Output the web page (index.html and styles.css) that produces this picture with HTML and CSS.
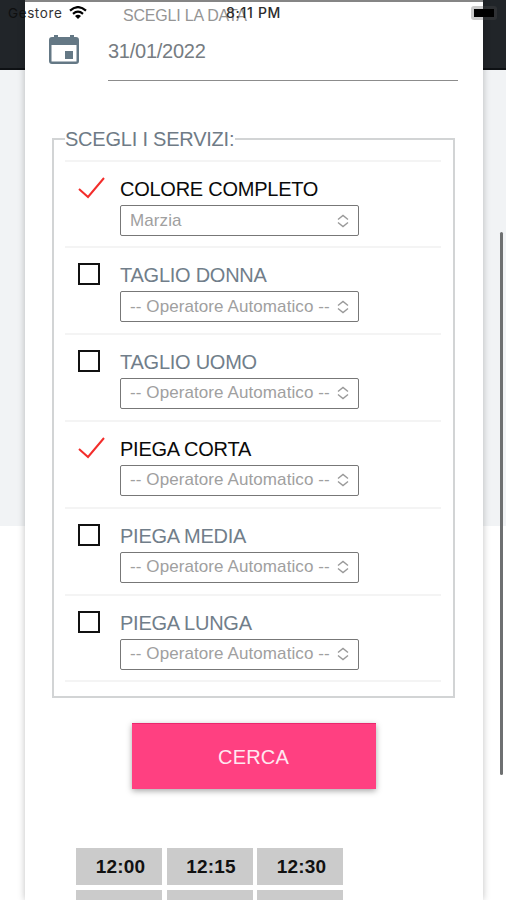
FILE: index.html
```
<!DOCTYPE html>
<html lang="it">
<head>
<meta charset="utf-8">
<title>Prenotazione</title>
<link rel="stylesheet" href="styles.css">
</head>
<body>
<div class="screen">
  <main class="card">
    <section class="date">
      <svg class="calendar" viewBox="0 0 30 31"><path fill="#647885" fill-rule="evenodd" d="M5 1h4v2h12V1h4v2h2q3 0 3 3v21q0 3-3 3H3q-3 0-3-3V6q0-3 3-3h2zM2.5 11v16.5h25V11z"/><path fill="#647885" d="M16 17h8v8h-8z"/></svg>
      <div class="date-field">
        <label class="date-label">SCEGLI LA DATA</label>
        <div class="date-value">31/01/2022</div>
      </div>
    </section>
    <fieldset class="services">
      <legend><span>SCEGLI I SERVIZI:</span></legend>
      <div class="row on"><svg class="tick" viewBox="0 0 28 22"><path d="M1 12l9 8L26 1"/></svg><div class="service"><span class="name">COLORE COMPLETO</span><div class="select"><span>Marzia</span><svg viewBox="0 0 12 14"><path d="M1 5.5l5-4 5 4M1 8.5l5 4 5-4"/></svg></div></div></div>
      <div class="row"><i class="box"></i><div class="service"><span class="name">TAGLIO DONNA</span><div class="select"><span>-- Operatore Automatico --</span><svg viewBox="0 0 12 14"><path d="M1 5.5l5-4 5 4M1 8.5l5 4 5-4"/></svg></div></div></div>
      <div class="row"><i class="box"></i><div class="service"><span class="name">TAGLIO UOMO</span><div class="select"><span>-- Operatore Automatico --</span><svg viewBox="0 0 12 14"><path d="M1 5.5l5-4 5 4M1 8.5l5 4 5-4"/></svg></div></div></div>
      <div class="row on"><svg class="tick" viewBox="0 0 28 22"><path d="M1 12l9 8L26 1"/></svg><div class="service"><span class="name">PIEGA CORTA</span><div class="select"><span>-- Operatore Automatico --</span><svg viewBox="0 0 12 14"><path d="M1 5.5l5-4 5 4M1 8.5l5 4 5-4"/></svg></div></div></div>
      <div class="row"><i class="box"></i><div class="service"><span class="name">PIEGA MEDIA</span><div class="select"><span>-- Operatore Automatico --</span><svg viewBox="0 0 12 14"><path d="M1 5.5l5-4 5 4M1 8.5l5 4 5-4"/></svg></div></div></div>
      <div class="row"><i class="box"></i><div class="service"><span class="name">PIEGA LUNGA</span><div class="select"><span>-- Operatore Automatico --</span><svg viewBox="0 0 12 14"><path d="M1 5.5l5-4 5 4M1 8.5l5 4 5-4"/></svg></div></div></div>
    </fieldset>
    <button class="search">CERCA</button>
    <div class="slots">
      <div>12:00</div><div>12:15</div><div>12:30</div>
      <div></div><div></div><div></div>
    </div>
  </main>
  <div class="status">
    <span class="carrier">Gestore</span>
    <svg class="wifi" viewBox="0 0 18 13"><g fill="none" stroke="#000" stroke-width="2.2"><path d="M1 4.6Q9-2.4 17 4.6"/><path d="M4 7.8q5-4.2 10 0"/></g><path d="M6 10q3-2.4 6 0l-3 3z"/></svg>
    <span class="clock">8:11 PM</span>
    <span class="battery"></span>
  </div>
  <div class="scrollbar"></div>
</div>
</body>
</html>
```
FILE: styles.css
```
* { box-sizing: border-box; }
body { margin: 0; font-family: "Liberation Sans", Arial, sans-serif; }
.screen {
  position: relative;
  height: 900px;
  overflow: hidden;
  padding: 0 23px 0 25px;
  background: linear-gradient(#212529 0 68px, #0e1114 68px 70px, #f1f3f5 70px 526px, #fff 526px);
}
.card {
  height: 900px;
  overflow: hidden;
  border-top: 2px solid #858585;
  background: #fff;
  box-shadow: 0 0 7px rgba(0, 0, 0, .25);
}
.date { display: flex; height: 79px; padding: 0 25px 0 24px; }
.calendar { width: 30px; height: 31px; margin: 32px 29px 0 0; }
.date-field { flex: 1; border-bottom: 1px solid #8c8c8c; }
.date-label {
  display: block;
  margin: 5px 0 0 15px;
  font-size: 16px;
  line-height: 18px;
  letter-spacing: -.2px;
  color: #959595;
}
.date-value { margin-top: 14px; font-size: 20px; line-height: 24px; letter-spacing: -.25px; color: #767c82; }
.services {
  height: 570px;
  margin: 47px 28px 0 27px;
  padding: 0 13px 0 12px;
  border: 2px solid #d2d4d5;
  min-width: 0;
}
legend { height: 21px; padding: 0; font-size: 20px; line-height: 21px; margin-left: -1px; color: #6f7b86; }
legend span { display: block; width: 170px; padding-top: 1px; white-space: nowrap; letter-spacing: -.22px; }
.services legend + .row { margin-top: 11px; height: 88px; border-top: 2px solid #f4f4f4; }
.row {
  display: flex;
  height: 86.9px;
  margin-left: -1px;
  margin-right: -1px;
  padding-top: 15px;
  border-bottom: 2px solid #f4f4f4;
}
.tick { width: 28px; height: 22px; margin: 0 14px 0 13px; fill: none; stroke: #f32d2b; stroke-width: 2; }
.box { width: 22px; height: 22px; margin: 0 20.5px 0 12.5px; border: 2px solid #111; }
.name { display: block; height: 26px; margin-top: 1px; font-size: 20px; line-height: 23px; letter-spacing: -.25px; color: #717e8a; white-space: nowrap; }
.on .name { color: #0a0a0a; }
.select {
  display: flex;
  align-items: center;
  justify-content: space-between;
  width: 239px;
  height: 31px;
  margin-top: 1px;
  padding: 0 9px 0 9px;
  border: 1px solid #777;
  border-radius: 2px;
  font-size: 17px;
  letter-spacing: .09px;
  color: #a0a0a0;
  white-space: nowrap;
}
.select svg { width: 12px; height: 14px; fill: none; stroke: #999; stroke-width: 1.4; }
.search {
  display: block;
  width: 244px;
  height: 66px;
  margin: 25px 0 0 106.5px;
  padding: 3px 0 0;
  border: 0;
  background: #ff4081;
  box-shadow: inset 0 1px #e9276d, 0 2px 6px rgba(0, 0, 0, .35);
  font: 20px "Liberation Sans", Arial, sans-serif;
  letter-spacing: .2px;
  color: #ffe8f0;
}
.slots {
  display: grid;
  grid-template-columns: repeat(3, 86px);
  grid-auto-rows: 37px;
  gap: 5px 4.5px;
  margin: 59px 0 0 51px;
}
.slots div { padding-left: 3px; background: #cbcbcb; text-align: center; font-size: 19px; line-height: 38px; letter-spacing: .2px; font-weight: 700; color: #111; }
.status { position: absolute; inset: 0 0 auto; height: 26px; font-size: 14px; line-height: 26px; color: #2c2c2c; }
.carrier { position: absolute; left: 8px; font-family: Inter, sans-serif; font-size: 13.5px; letter-spacing: .6px; color: #0c0c0c; opacity: .85; }
.wifi { position: absolute; left: 69px; top: 6px; width: 18px; height: 13px; }
.clock { position: absolute; left: 226px; font-family: Inter, sans-serif; font-weight: 500; letter-spacing: .7px; white-space: nowrap; }
.battery { position: absolute; left: 471px; top: 6px; width: 26px; height: 14px; border: 3px solid rgba(80, 80, 80, .3); border-radius: 3px; background: #000 padding-box; }
.scrollbar { position: absolute; left: 500px; top: 232px; width: 3px; height: 543px; border-radius: 2px; background: #6e7071; }
```
